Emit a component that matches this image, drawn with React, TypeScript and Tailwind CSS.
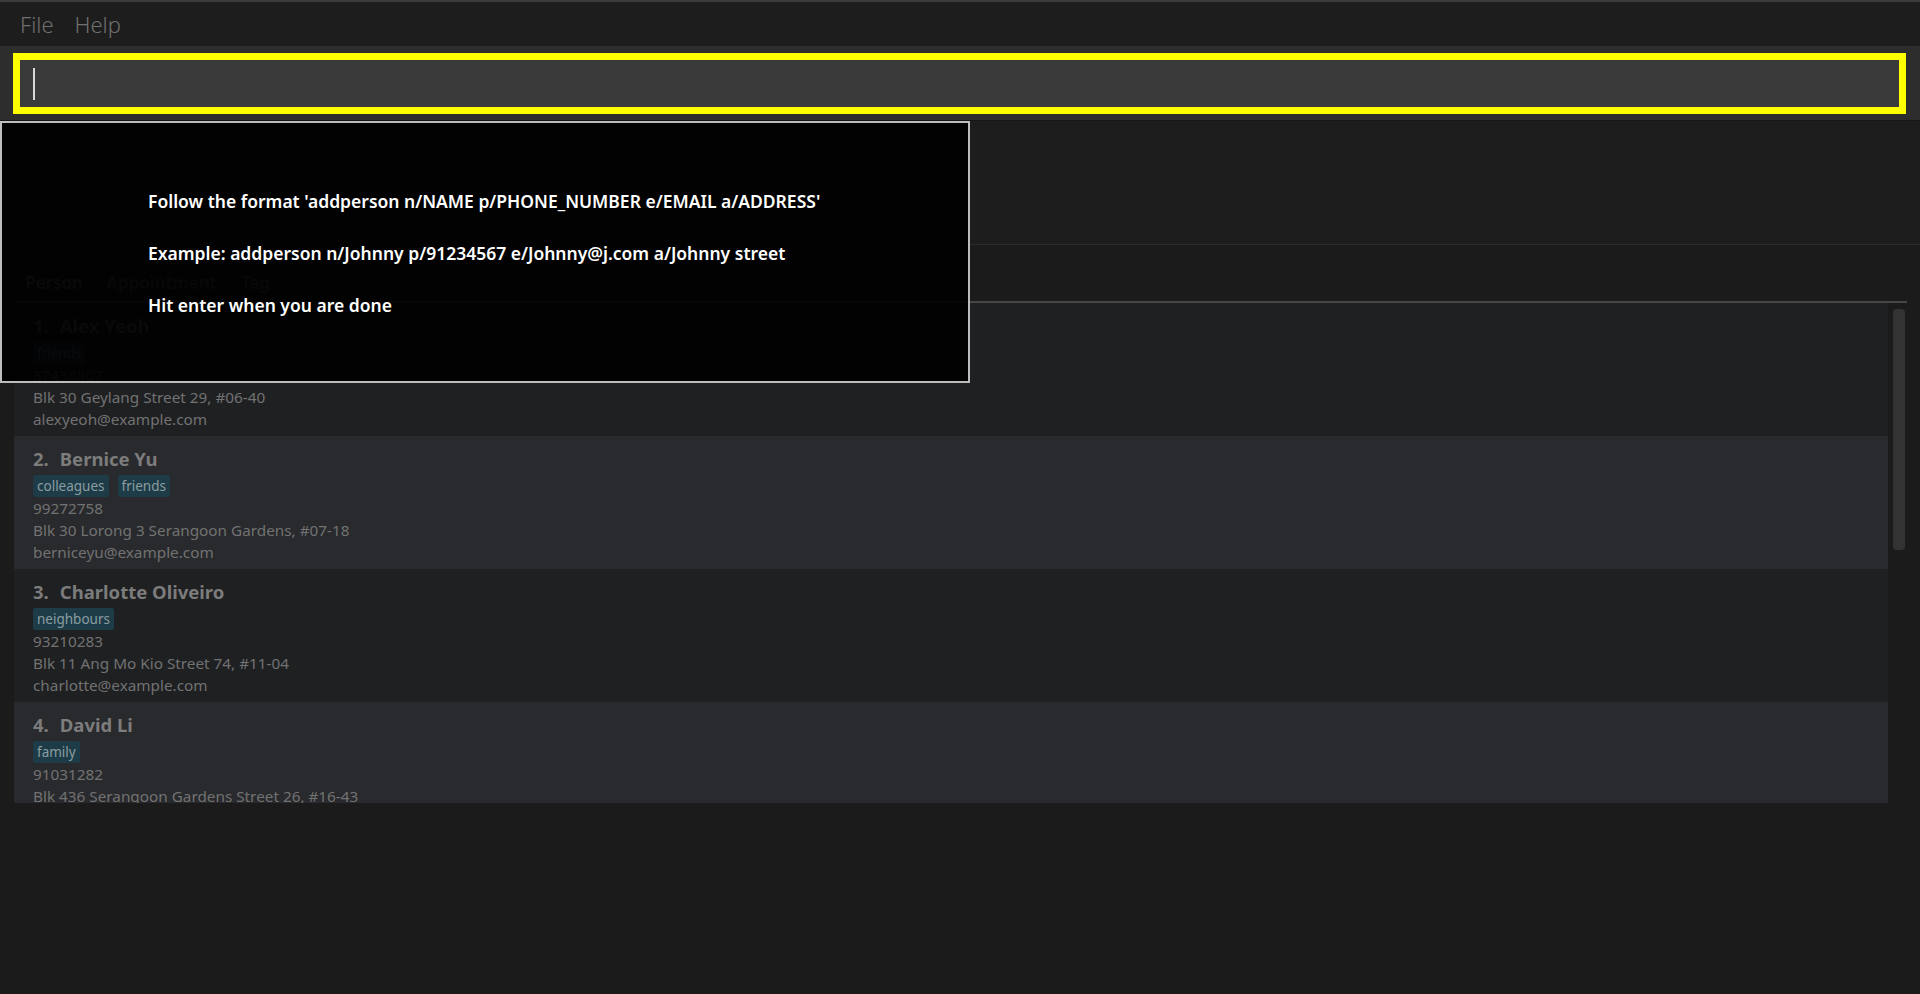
import React from "react";

type Person = {
  name: string;
  tags: string[];
  phone: string;
  address: string;
  email: string;
};

const persons: Person[] = [
  { name: "Alex Yeoh", tags: ["friends"], phone: "87438807", address: "Blk 30 Geylang Street 29, #06-40", email: "alexyeoh@example.com" },
  { name: "Bernice Yu", tags: ["colleagues", "friends"], phone: "99272758", address: "Blk 30 Lorong 3 Serangoon Gardens, #07-18", email: "berniceyu@example.com" },
  { name: "Charlotte Oliveiro", tags: ["neighbours"], phone: "93210283", address: "Blk 11 Ang Mo Kio Street 74, #11-04", email: "charlotte@example.com" },
  { name: "David Li", tags: ["family"], phone: "91031282", address: "Blk 436 Serangoon Gardens Street 26, #16-43", email: "lidavid@example.com" },
];

function PersonCard({ p, index }: { p: Person; index: number }) {
  return (
    <div className={`h-[133px] shrink-0 pl-[19px] pt-[11px] ${index % 2 === 0 ? "bg-[#1f2022]" : "bg-[#292a2d]"}`}>
      <div className="h-[24px] leading-[24px] text-[18.5px] font-bold text-[#7c7c7c]">
        {index + 1}.<span className="inline-block w-[11px]" />{p.name}
      </div>
      <div className="flex gap-[9px] mt-[4px] h-[22px]">
        {p.tags.map(t => (
          <span key={t} className="h-[22px] leading-[22px] px-[4px] rounded-[2px] bg-[#1d3c47] text-[#8b9da2] text-[13.5px]">
            {t}
          </span>
        ))}
      </div>
      <div className="text-[15.3px] leading-[22px] text-[#727272]">
        <div>{p.phone}</div>
        <div>{p.address}</div>
        <div>{p.email}</div>
      </div>
    </div>
  );
}

export default function App() {
  return (
    <div className="relative w-[1920px] h-[994px] overflow-hidden bg-[#1b1b1b] flex flex-col font-['Noto_Sans',sans-serif]">
      {/* menu bar */}
      <div className="h-[46px] shrink-0 bg-[#1d1d1d] border-t-2 border-[#3c3c3c] flex items-center gap-[21px] pl-[20px] text-[22px] font-light text-[#707070]">
        <span>File</span>
        <span>Help</span>
      </div>

      {/* command box */}
      <div className="h-[75px] shrink-0 bg-[#2d2d2d] pl-[13px] pr-[14px] pt-[7px] border-b border-[#161616]">
        <div className="h-[61px] border-[7px] border-[#ffff00] bg-[#3a3a3a] flex items-center pl-[13px]">
          <div className="w-[2px] h-[32px] bg-[#d8d8d8]" />
        </div>
      </div>

      {/* result display */}
      <div className="h-[124px] shrink-0 bg-[#1d1d1d] border-b border-[#2b2b2b]" />

      {/* tabs */}
      <div className="pl-[14px] pr-[13px] pt-[16px] shrink-0">
        <div className="flex gap-[3px] pl-[1px] h-[40px] items-stretch">
          <div className="w-[78px] bg-[#242424] border border-[#2f2f2f] flex items-center justify-center pt-[4px] text-[17px] font-semibold text-[#7a7a7a]">Person</div>
          <div className="w-[131px] bg-[#202020] border border-[#2f2f2f] flex items-center justify-center pt-[4px] text-[17px] font-semibold text-[#6a6a6a]">Appointment</div>
          <div className="w-[51px] bg-[#202020] border border-[#2f2f2f] flex items-center justify-center pt-[4px] text-[17px] font-semibold text-[#6a6a6a]">Tag</div>
        </div>
        <div className="h-[2px] bg-[#474747]" />
      </div>

      {/* person list */}
      <div className="flex h-[500px] shrink-0 pl-[14px]">
        <div className="w-[1874px] flex flex-col overflow-hidden">
          {persons.map((p, i) => (
            <PersonCard key={p.name} p={p} index={i} />
          ))}
        </div>
        <div className="pl-[5px] pt-[6px]">
          <div className="w-[12px] h-[241px] rounded-[4px] bg-[#333333]" />
        </div>
      </div>

      {/* tooltip popup */}
      <div className="absolute left-0 top-[121px] w-[970px] h-[262px] bg-black/[0.93] border-2 border-[#bdbdbd] pl-[146px] pt-[65px] text-white text-[17.5px] font-semibold leading-[26px]">
        <div>Follow the format 'addperson n/NAME p/PHONE_NUMBER e/EMAIL a/ADDRESS'</div>
        <div className="h-[26px]" />
        <div>Example: addperson n/Johnny p/91234567 e/Johnny@j.com a/Johnny street</div>
        <div className="h-[26px]" />
        <div>Hit enter when you are done</div>
      </div>
    </div>
  );
}
